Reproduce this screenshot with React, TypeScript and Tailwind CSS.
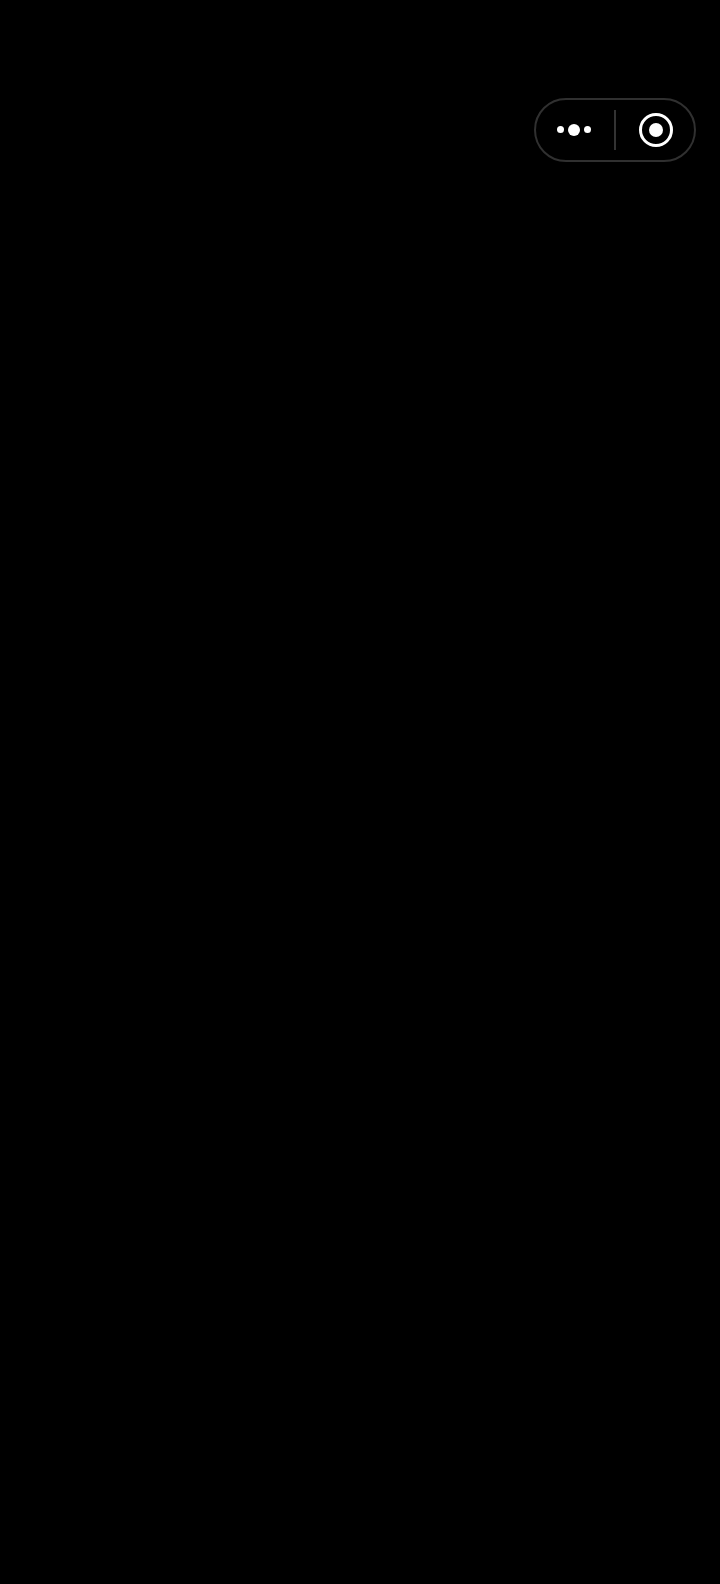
import React from 'react';

export default function App() {
  return (
    <div className="min-h-[1584px] bg-black flex justify-end items-start pt-[98px] pr-[24px]">
      {/* capsule menu */}
      <div className="w-[162px] h-[64px] rounded-full border-2 border-[#303030] flex items-center pb-[1px]">
        <div className="flex-1 flex items-center justify-center gap-[4px] pr-[2px]">
          <span className="w-[7px] h-[7px] rounded-full bg-white" />
          <span className="w-[12px] h-[12px] rounded-full bg-white" />
          <span className="w-[7px] h-[7px] rounded-full bg-white" />
        </div>
        <div className="w-[2px] h-[40px] bg-[#333333]" />
        <div className="flex-1 flex items-center justify-center pl-[2px]">
          <div className="w-[34px] h-[34px] rounded-full border-[3px] border-white flex items-center justify-center">
            <span className="w-[14px] h-[14px] rounded-full bg-white" />
          </div>
        </div>
      </div>
    </div>
  );
}
